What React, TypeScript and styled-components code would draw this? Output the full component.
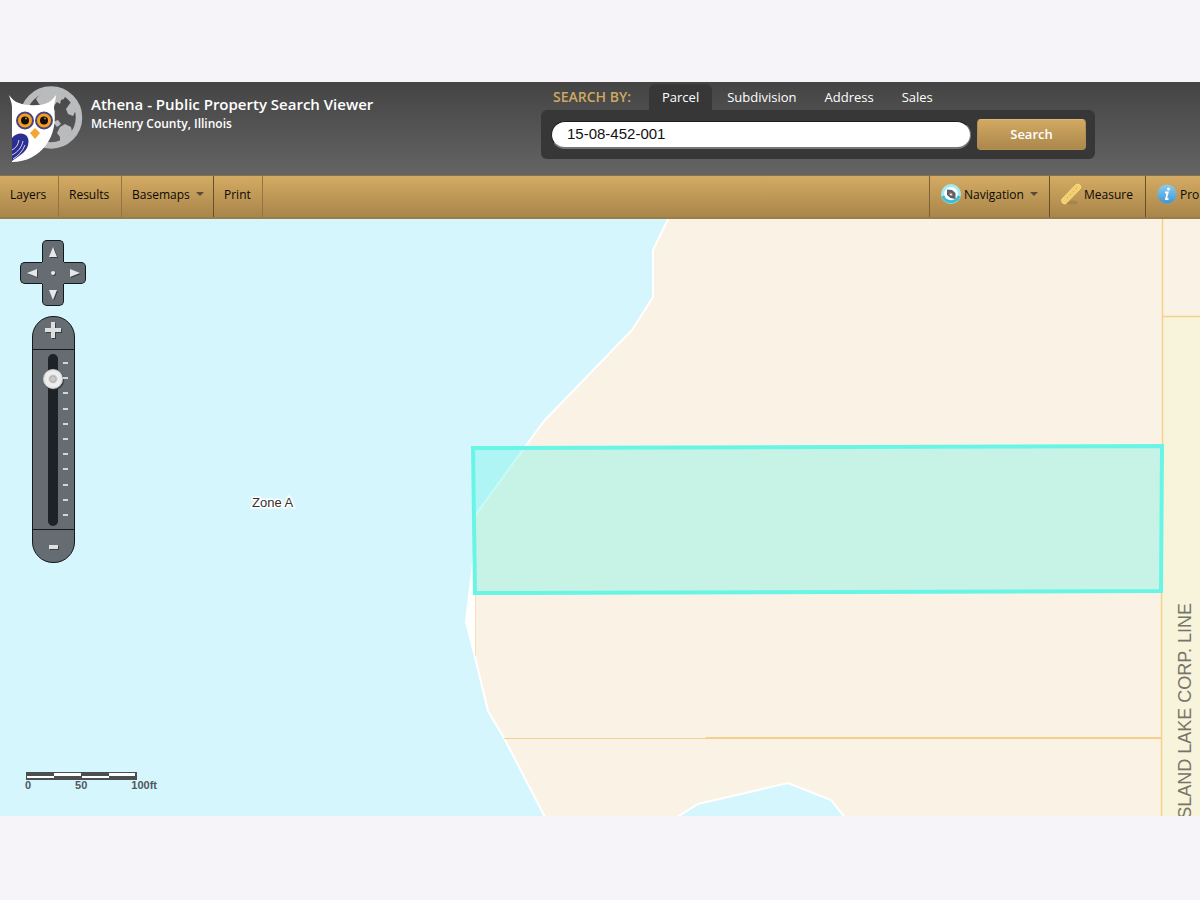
import React, { useState } from "react";
import styled, { createGlobalStyle, css } from "styled-components";

const GlobalStyle = createGlobalStyle`
  *, *::before, *::after { box-sizing: border-box; }
  body {
    margin: 0;
    background: #f6f4f8;
    font-family: "Trebuchet MS", "Open Sans", "Noto Sans", sans-serif;
  }
  button, input { font: inherit; }
`;

const Page = styled.div`
  display: flex;
  flex-direction: column;
  min-height: 100vh;
  padding: 82px 0 84px;
  overflow: hidden;
`;

const Header = styled.header`
  display: flex;
  align-items: flex-start;
  height: 93px;
  background: linear-gradient(#444, #575757 60%, #646464);
`;

const Logo = styled.svg`
  flex: none;
  width: 76px;
  height: 80px;
  margin: 3px 0 0 8px;
`;

const Titles = styled.div`
  padding: 12px 0 0 7px;
  color: #fff;
  white-space: nowrap;
`;

const Title = styled.h1`
  margin: 0;
  font-size: 15px;
  line-height: 20px;
  font-weight: 600;
`;

const Subtitle = styled.p`
  margin: 0;
  font-size: 12px;
  line-height: 20px;
  font-weight: 600;
`;

const SearchArea = styled.form`
  width: 554px;
  margin: 0 105px 0 auto;
`;

const SearchTabs = styled.div`
  display: flex;
  height: 28px;
  padding: 2px 0 0 12px;
`;

const SearchLabel = styled.span`
  width: 96px;
  color: #cfa862;
  font-size: 14px;
  line-height: 26px;
  font-weight: 600;
`;

const Tab = styled.button<{ $active?: boolean }>`
  margin-right: 2px;
  padding: 0 13px;
  border: 0;
  border-radius: 6px 6px 0 0;
  background: ${(p) => (p.$active ? "#373737" : "transparent")};
  color: #fff;
  font-size: 13px;
  line-height: 26px;
  cursor: pointer;
`;

const SearchPanel = styled.div`
  display: flex;
  align-items: center;
  gap: 6px;
  height: 49px;
  padding: 0 9px 0 10px;
  border-radius: 6px;
  background: #373737;
`;

const SearchInput = styled.input`
  flex: 1;
  min-width: 0;
  height: 28px;
  padding: 0 15px 2px;
  border: 1px solid #777;
  border-width: 1px 1px 2px;
  border-top-color: #1c1c1c;
  border-left-color: #222;
  border-radius: 14px;
  background: #fff;
  color: #111;
  font-family: "Liberation Sans", Arial, sans-serif;
  font-size: 15px;
`;

const SearchButton = styled.button`
  width: 109px;
  height: 31px;
  padding: 0 0 2px;
  border: 1px solid #b08f55;
  border-top-color: #d9b67a;
  border-radius: 4px;
  background: linear-gradient(#d2a962, #aa874b);
  color: #fff;
  font-size: 13px;
  font-weight: 600;
  cursor: pointer;
`;

const Toolbar = styled.nav`
  display: flex;
  height: 44px;
  border-top: 1px solid #8a7048;
  border-bottom: 2px solid #9b7d4a;
  background: linear-gradient(#d4ab63, #a8854a);
`;

const ToolGroup = styled.div<{ $end?: boolean }>`
  display: flex;
  ${(p) =>
    p.$end &&
    css`
      margin-left: auto;
      border-left: 1px solid #7d6235;
    `}
`;

const ToolButton = styled.button<{ $width: number; $dark?: boolean; $last?: boolean }>`
  display: flex;
  align-items: center;
  flex: none;
  width: ${(p) => p.$width}px;
  padding: 0 0 5px 10px;
  border: 0;
  border-right: ${(p) => (p.$last ? "0" : p.$dark ? "1px solid #62502f" : "1px solid #917543")};
  background: transparent;
  color: #0c0904;
  font-size: 12px;
  white-space: nowrap;
  cursor: pointer;
`;

const Caret = styled.span`
  margin-left: 6px;
  border: 4px solid transparent;
  border-top-color: #5b4a3a;
  border-bottom: 0;
`;

const ToolIcon = styled.svg`
  flex: none;
  width: 22px;
  height: 22px;
  margin-right: 2px;
`;

const MapArea = styled.main`
  position: relative;
  flex: 1;
  min-height: 597px;
  overflow: hidden;
  background: #d6f6fe;
`;

const MapDrawing = styled.svg`
  position: absolute;
  inset: 0;
  width: 100%;
  height: 100%;
`;

const Controls = styled.div`
  position: absolute;
  top: 21px;
  left: 20px;
  display: flex;
  flex-direction: column;
  align-items: center;
  gap: 10px;
  width: 66px;
`;

const PanPad = styled.div`
  display: grid;
  grid-template: "a n b" 22px "w c e" 22px "d s f" 22px / 22px 22px 22px;
`;

const edges = {
  n: "border-width: 1px 1px 0; border-radius: 5px 5px 0 0;",
  s: "border-width: 0 1px 1px; border-radius: 0 0 5px 5px;",
  w: "border-width: 1px 0 1px 1px; border-radius: 5px 0 0 5px;",
  e: "border-width: 1px 1px 1px 0; border-radius: 0 5px 5px 0;",
  c: "border-width: 0;",
};

const PanButton = styled.button<{ $side: keyof typeof edges }>`
  display: grid;
  place-items: center;
  grid-area: ${(p) => p.$side};
  padding: 0;
  border: solid #15191c;
  ${(p) => edges[p.$side]}
  background: #656d73;
  cursor: pointer;

  svg {
    width: 14px;
    height: 14px;
    filter: drop-shadow(1px 1px 0 #3a3f43);
  }
`;

const ZoomBar = styled.div`
  width: 43px;
  border: 1px solid #15191c;
  border-radius: 21px;
  background: #656d73;
  overflow: hidden;
`;

const ZoomButton = styled.button<{ $in?: boolean }>`
  display: grid;
  place-items: center;
  width: 100%;
  height: 32px;
  padding: 0 0 ${(p) => (p.$in ? 7 : 0)}px;
  border: 0;
  background: transparent;
  cursor: pointer;

  svg {
    width: 18px;
    height: 18px;
    filter: drop-shadow(1px 1px 0 #3a3f43);
  }
`;

const ZoomTrack = styled.div`
  display: flex;
  justify-content: flex-end;
  height: 181px;
  padding: 4px 6px 0 0;
  border: solid #15191c;
  border-width: 1px 0;
`;

const ZoomRange = styled.input`
  appearance: none;
  writing-mode: vertical-lr;
  direction: rtl;
  width: 10px;
  height: 172px;
  margin: 0 5px;
  background: #1d2226;
  border-radius: 5px;
  cursor: pointer;

  &::-webkit-slider-thumb {
    appearance: none;
    width: 20px;
    height: 20px;
    border-radius: 50%;
    border: 1px solid #c9cccd;
    background: radial-gradient(circle, #c9cac9 0 2px, #aeb0af 3px, #f0f0ef 5px, #e2e2e0 100%);
    box-shadow: 1px 1px 1px #333;
  }
`;

const Ticks = styled.div`
  display: flex;
  flex-direction: column;
  justify-content: space-between;
  width: 5px;
  height: 154px;
  margin-top: 8px;
`;

const Tick = styled.i`
  width: 5px;
  height: 2px;
  background: #d3d7d9;
`;

const Scale = styled.div`
  position: absolute;
  left: 25px;
  bottom: 25px;
  width: 132px;
  color: #51575a;
  font-family: "Liberation Sans", Arial, sans-serif;
  font-size: 11px;
  line-height: 11px;
  font-weight: 700;

  svg {
    display: block;
    width: 111px;
    height: 8px;
    margin-left: 1px;
  }
`;

const ScaleLabels = styled.div`
  display: flex;
  justify-content: space-between;
`;

const arrows: { side: keyof typeof edges; label: string; path: string }[] = [
  { side: "n", label: "Pan north", path: "M7 2 L11 12 H3Z" },
  { side: "w", label: "Pan west", path: "M2 7 L12 3 V11Z" },
  { side: "c", label: "Recenter", path: "M7 5 a2 2 0 1 0 .1 0Z" },
  { side: "e", label: "Pan east", path: "M12 7 L2 3 V11Z" },
  { side: "s", label: "Pan south", path: "M7 12 L3 2 H11Z" },
];

function OwlLogo() {
  return (
    <Logo viewBox="8 85 76 80" aria-hidden="true">
      <g fill="#b9bbbd">
        <path d="M36 99c7-9 21-11 30-5l-2 5-3 1-1 4-3-2-4 5 2 5-4 2-6-6-6-4z" />
        <path d="M53 122l5-2 3 4-4 3z" />
        <path d="M60 127l5-3 6 3 1 5-4 4-2 6-3 4-3-3v-6l-3-4z" />
        <path d="M66 109l5-7 5 8-3 6-5-2z" />
      </g>
      <circle cx="51" cy="117.500" r="28" fill="none" stroke="#b9bbbd" strokeWidth="6.500" />
      <path d="M9 95c3 4 6 7 10 8 7 3 22 3 28 0 3-1 6-4 9-8 0 5-2 8-2 13 5 28-13 54-42 54V107c0-4-2-8-3-12Z" fill="#fff" />
      <path d="M12 138c5-7 17-6 16.500 4C28 151 22 154 12 161Z" fill="#2b2f92" />
      <path d="M12 150c4-2 6-5 7-10M12 155c6-3 10-8 11-14M13 159c5-3 10-8 12-14" fill="none" stroke="#fff" strokeWidth=".8" />
      {[25, 44].map((x) => (
        <g key={x}>
          <circle cx={x} cy="120.500" r="8" fill="#f5a11c" stroke="#4a4380" strokeWidth="2" />
          <circle cx={x} cy="120.500" r="4" fill="#160e0b" />
          <circle cx={x + 1} cy="118.500" r="1" fill="#9a8877" />
        </g>
      ))}
      <path d="M35 128l5 5-5 6-5-6Z" fill="#f5a531" />
    </Logo>
  );
}

function CompassIcon() {
  return (
    <ToolIcon viewBox="0 0 22 22" aria-hidden="true">
      <circle cx="11" cy="11" r="8.500" fill="#fff" stroke="#a5e8f2" strokeWidth="3" />
      <path d="M3 13a8.500 8.500 0 0 0 16 0" fill="none" stroke="#3fbcd2" strokeWidth="3" />
      <path d="M7 6.500l5 .5 3.500 3v6l-5-1-3.500-3Z" fill="#526273" />
      <path d="M9 9l4 1.500v2.500l-4-1Z" fill="#b86a48" />
      <circle cx="11" cy="11.500" r="1" fill="#f2f4f5" />
    </ToolIcon>
  );
}

function RulerIcon() {
  return (
    <ToolIcon viewBox="0 0 22 22" aria-hidden="true">
      <ellipse cx="12" cy="19.500" rx="6" ry="2" fill="#8c6e3b" opacity=".35" />
      <path d="M2 16L16 1.500q2-1 4 .5 1.500 2 0 4L6 20.500q-2 1-3.500-.5-1.500-2-.5-4Z" fill="#f2cf6c" stroke="#f8de8d" strokeWidth="1" />
      <path d="M7 14l1 1M10 11l1 1M13 8l1 1M16 5l1 1" stroke="#d3ac4c" strokeWidth="1" />
    </ToolIcon>
  );
}

function InfoIcon() {
  return (
    <ToolIcon viewBox="0 0 22 22" aria-hidden="true">
      <defs>
        <linearGradient id="info" x1="0" y1="0" x2="0" y2="1">
          <stop offset="0" stopColor="#8ccdf0" />
          <stop offset="1" stopColor="#3b97da" />
        </linearGradient>
      </defs>
      <circle cx="11" cy="11" r="9.500" fill="url(#info)" />
      <circle cx="12.500" cy="6" r="1.500" fill="#fff" />
      <path d="M9 9.500h2.700l-1.700 6.500h2.500" fill="none" stroke="#fff" strokeWidth="1.800" />
    </ToolIcon>
  );
}

function ParcelMap() {
  const parcel = "473,448 1162,446 1161,591 475,593";
  return (
    <MapDrawing viewBox="0 219 1200 597" preserveAspectRatio="xMidYMid slice" role="img" aria-label="Parcel map">
      <rect y="219" width="1200" height="597" fill="#d6f6fe" />
      <path d="M668 219L653 250V297L632 330 544 421 474 517V555L466 622 475 657 488 711 504 738 546 819H1203V216H668Z" fill="#faf3e5" stroke="#fff" strokeWidth="2" />
      <path d="M475 545L466 622 475 655Z" fill="#fff" />
      <path d="M1162 316H1200V816H1162Z" fill="#f8f3db" />
      <path d="M674 819L698 804 788 783 831 800 846 819Z" fill="#d6f6fe" stroke="#fff" strokeWidth="2" />
      <g fill="none" stroke="#f3d18c">
        <path d="M475.500 594V656" strokeWidth="1" stroke="#fae0b4" />
        <path d="M504 738.500H706" strokeWidth="1" />
        <path d="M706 738H1162" strokeWidth="2" />
        <path d="M1162.500 219V446M1161.500 592V816M1162 316.500H1200" strokeWidth="1.500" />
      </g>
      <polygon points={parcel} fill="#69f5e6" fillOpacity=".36" stroke="#69f5e6" strokeWidth="4" />
      <text x="252" y="507" fontFamily="Liberation Sans, Arial, sans-serif" fontSize="13" fill="#38302e" stroke="#fff" strokeWidth="3" paintOrder="stroke">
        Zone A
      </text>
      <text transform="translate(1191 603) rotate(-90)" textAnchor="end" fontFamily="Liberation Sans, Arial, sans-serif" fontSize="18" fill="#77746a">
        ISLAND LAKE CORP. LINE
      </text>
    </MapDrawing>
  );
}

export default function App() {
  const [tab, setTab] = useState("Parcel");
  const [zoom, setZoom] = useState(9);
  const step = (by: number) => setZoom((z) => Math.min(10, Math.max(0, z + by)));

  return (
    <>
      <GlobalStyle />
      <Page>
        <Header>
          <OwlLogo />
          <Titles>
            <Title>Athena - Public Property Search Viewer</Title>
            <Subtitle>McHenry County, Illinois</Subtitle>
          </Titles>
          <SearchArea onSubmit={(e) => e.preventDefault()}>
            <SearchTabs>
              <SearchLabel>SEARCH BY:</SearchLabel>
              {["Parcel", "Subdivision", "Address", "Sales"].map((name) => (
                <Tab key={name} type="button" $active={name === tab} onClick={() => setTab(name)}>
                  {name}
                </Tab>
              ))}
            </SearchTabs>
            <SearchPanel>
              <SearchInput aria-label="Search value" defaultValue="15-08-452-001" />
              <SearchButton type="submit">Search</SearchButton>
            </SearchPanel>
          </SearchArea>
        </Header>
        <Toolbar aria-label="Map tools">
          <ToolGroup>
            <ToolButton $width={59}>Layers</ToolButton>
            <ToolButton $width={63}>Results</ToolButton>
            <ToolButton $width={92} $dark>
              Basemaps
              <Caret />
            </ToolButton>
            <ToolButton $width={49}>Print</ToolButton>
          </ToolGroup>
          <ToolGroup $end>
            <ToolButton $width={120} $dark>
              <CompassIcon />
              Navigation
              <Caret />
            </ToolButton>
            <ToolButton $width={96} $dark>
              <RulerIcon />
              Measure
            </ToolButton>
            <ToolButton $width={54} $last>
              <InfoIcon />
              Pro
            </ToolButton>
          </ToolGroup>
        </Toolbar>
        <MapArea>
          <ParcelMap />
          <Controls>
            <PanPad>
              {arrows.map((a) => (
                <PanButton key={a.side} $side={a.side} aria-label={a.label}>
                  <svg viewBox="0 0 14 14">
                    <path d={a.path} fill="#e6e7e7" />
                  </svg>
                </PanButton>
              ))}
            </PanPad>
            <ZoomBar>
              <ZoomButton $in aria-label="Zoom in" onClick={() => step(1)}>
                <svg viewBox="0 0 18 18">
                  <path d="M7 1h4v6h6v4h-6v6H7v-6H1V7h6Z" fill="#dedfdf" />
                </svg>
              </ZoomButton>
              <ZoomTrack>
                <ZoomRange type="range" aria-label="Zoom level" min={0} max={10} value={zoom} onChange={(e) => setZoom(Number(e.target.value))} />
                <Ticks>
                  {Array.from({ length: 11 }, (_, i) => (
                    <Tick key={i} />
                  ))}
                </Ticks>
              </ZoomTrack>
              <ZoomButton aria-label="Zoom out" onClick={() => step(-1)}>
                <svg viewBox="0 0 18 18">
                  <path d="M5 8h9v4H5Z" fill="#dedfdf" />
                </svg>
              </ZoomButton>
            </ZoomBar>
          </Controls>
          <Scale>
            <svg viewBox="0 0 111 8" aria-hidden="true">
              <rect width="111" height="8" fill="#4b4f50" />
              <path d="M28 1h27v3H28ZM83 1h26v3H83ZM1 4h27v2H1ZM56 4h27v2H56Z" fill="#fff" />
            </svg>
            <ScaleLabels>
              <span>0</span>
              <span>50</span>
              <span>100ft</span>
            </ScaleLabels>
          </Scale>
        </MapArea>
      </Page>
    </>
  );
}
